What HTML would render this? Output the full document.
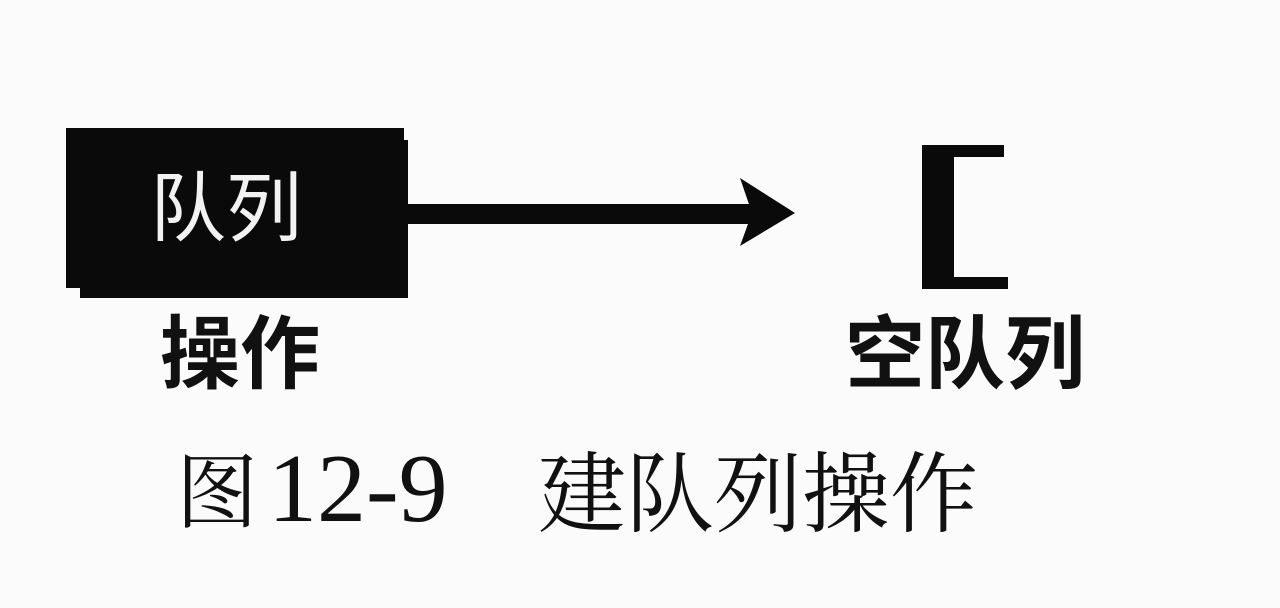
<!DOCTYPE html>
<html><head><meta charset="utf-8"><style>
body{margin:0;width:1280px;height:608px;background:#fbfbfb;position:relative;overflow:hidden;font-family:"Liberation Sans","Noto Sans CJK SC",sans-serif}
.a{position:absolute;white-space:nowrap;line-height:1}
</style></head><body>
<div class="a" style="left:66px;top:128px;width:338px;height:160px;background:#0a0a0a"></div>
<div class="a" style="left:80px;top:140px;width:328px;height:158px;background:#0a0a0a"></div>
<div class="a" style="left:150px;top:164px;font-size:76px;color:#f2f2f2;font-family:'Noto Sans CJK SC',sans-serif">队列</div>
<div class="a" style="left:404px;top:204px;width:350px;height:20px;background:#0a0a0a"></div>
<svg class="a" style="left:740px;top:178px" width="60" height="70"><polygon points="0,0 55,35 0,68 12,35" fill="#0a0a0a"/></svg>
<div class="a" style="left:922px;top:145px;width:32px;height:143px;background:#0a0a0a"></div>
<div class="a" style="left:922px;top:145px;width:82px;height:12px;background:#0a0a0a"></div>
<div class="a" style="left:922px;top:277px;width:86px;height:12px;background:#0a0a0a"></div>
<div class="a" style="left:160px;top:308px;font-size:80px;font-weight:bold;color:#111;font-family:'Noto Sans CJK SC',sans-serif">操作</div>
<div class="a" style="left:845px;top:308px;font-size:80px;font-weight:bold;color:#111;font-family:'Noto Sans CJK SC',sans-serif">空队列</div>
<div class="a" style="left:176px;top:446px;font-size:82px;color:#111;font-family:'Noto Serif CJK SC',serif">图</div>
<div class="a" style="left:268px;top:440px;font-size:98px;color:#111;font-family:'Liberation Serif',serif">12-9</div>
<div class="a" style="left:538px;top:444px;font-size:88px;color:#111;font-family:'Noto Serif CJK SC',serif">建队列操作</div>
</body></html>
